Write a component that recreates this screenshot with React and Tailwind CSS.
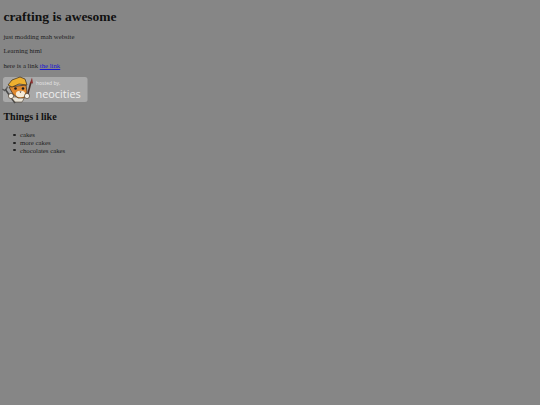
const NeocitiesBadge = () => {
  return (
    <svg width="88" height="28" viewBox="0 0 88 28" className="block">
      <rect x="3" y="1" width="84.5" height="25" rx="2.5" fill="#a9a9a9" />
      {/* wrench */}
      <path d="M5 13 L15 27" stroke="#4a4a4a" strokeWidth="1.6" fill="none" />
      <path d="M2.5 13 L5 15 M7.5 10.5 L6 14" stroke="#555" strokeWidth="1.2" fill="none" />
      {/* brush */}
      <path d="M27 21 L31 6" stroke="#4a3028" strokeWidth="1.6" />
      <path d="M30 7 L32 1.5 L33 7.5 Z" fill="#8c3030" />
      {/* cat */}
      <path d="M11 21 L15 26 L22 26 L25 21 Z" fill="#e8e4d8" stroke="#3a2a1a" strokeWidth="0.5" />
      <path d="M9 11 L13 18 L18 22 L24 22 L27 16 L26 9 Z" fill="#e08a30" stroke="#3a2a1a" strokeWidth="0.7" />
      <path d="M8 9 L12 4 L20 1 L25 3 L27 9 L19 8 L12 11 Z" fill="#eeb030" stroke="#3a2a1a" strokeWidth="0.7" />
      <ellipse cx="20.5" cy="18" rx="4.6" ry="3.2" fill="#f6ecd8" />
      <circle cx="15.5" cy="12.5" r="1.3" fill="#1c1c1c" />
      <circle cx="23" cy="12.5" r="1.3" fill="#1c1c1c" />
      <path d="M19.5 15.5 L21.5 15.5 L20.5 17 Z" fill="#3a2020" />
      <circle cx="11" cy="20" r="2.6" fill="#f6f2e8" stroke="#3a2a1a" strokeWidth="0.6" />
      <circle cx="27" cy="20" r="2.6" fill="#f6f2e8" stroke="#3a2a1a" strokeWidth="0.6" />
      <text x="36" y="8.9" fontFamily="Open Sans, sans-serif" fontSize="5" fill="#e6e6e6">hosted by,</text>
      <text x="35.5" y="22" fontFamily="Open Sans, sans-serif" fontSize="10.9" fill="#eeeeee">neocities</text>
    </svg>
  )
}

const items = ['cakes', 'more cakes', 'chocolates cakes']

const App = () => {
  return (
    <div className="min-h-screen bg-[#868686] px-[3.4px] pt-[8.5px] font-['Liberation_Serif',serif] text-[6.75px] leading-[7.6px] text-[#222]">
      <h1 className="text-[13.5px] leading-[15.5px] font-bold text-[#111]">crafting is awesome</h1>
      <p className="mt-[9px]">just modding mah website</p>
      <p className="mt-[6.75px]">Learning html</p>
      <p className="mt-[6.75px]">here is a link <a href="#" className="text-[#1a1ad0] underline">the link</a></p>
      <a href="#" className="-ml-[3.4px] mt-[6.5px] block w-fit">
        <NeocitiesBadge />
      </a>
      <h2 className="mt-[7.5px] text-[10.1px] leading-[11.6px] font-bold text-[#111]">Things i like</h2>
      <ul className="mt-[8.5px] pl-[10px]">
        {items.map((item) => (
          <li key={item} className="flex items-center gap-[4.4px]">
            <span className="h-[2.2px] w-[2.2px] rounded-full bg-[#222]"></span>
            {item}
          </li>
        ))}
      </ul>
    </div>
  )
}

export default App
